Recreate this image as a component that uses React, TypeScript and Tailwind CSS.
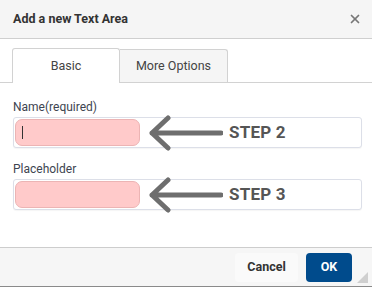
import { X } from 'lucide-react'

function Arrow() {
  return (
    <svg width="76" height="36" viewBox="0 0 76 36" className="shrink-0">
      <path d="M74 18H5M21 3L5 18l16 15" fill="none" stroke="#6e6e6e" strokeWidth="5" strokeLinecap="round" strokeLinejoin="round" />
    </svg>
  )
}

function AnnotatedField({ label, step, cursor = false }: { label: string, step: string, cursor?: boolean }) {
  return (
    <div className="flex flex-col">
      <label className="text-[12px] leading-[14px] text-[#3d4450]">{label}</label>
      <div className="mt-[3px] h-[31px] border border-[#dcdfe8] rounded-[3px] bg-white flex items-center shadow-[0_1px_1px_rgba(0,0,0,0.04)]">
        <div className="ml-px w-[125px] h-[27px] rounded-[7px] bg-[#ffcaca] border border-[#ecb4b4] flex items-center">
          {cursor && <div className="ml-[6px] w-px h-[13px] bg-[#333]" />}
        </div>
        <div className="ml-[7px]">
          <Arrow />
        </div>
        <span className="ml-[6px] text-[17px] font-bold text-[#555] leading-none tracking-[0.2px]">{step}</span>
      </div>
    </div>
  )
}

export default function App() {
  return (
    <div className="w-[372px] h-[287px] bg-white flex flex-col relative font-['Roboto','Liberation_Sans',sans-serif]">
      <div className="h-[39px] shrink-0 bg-[#f5f5f5] border-b border-[#cfcfcf] flex items-center justify-between pl-[13px] pr-[10px]">
        <h2 className="text-[12.5px] font-bold text-[#333] pt-px">Add a new Text Area</h2>
        <X size={14} strokeWidth={3} className="text-[#777]" />
      </div>

      <div className="h-[44px] shrink-0 flex items-end border-b border-[#d2d2d2] pl-[12px]">
        <div className="w-[108px] h-[35px] -mb-px bg-white border border-b-0 border-[#d2d2d2] rounded-t-[3px] flex items-center justify-center text-[12.5px] text-[#444]">
          Basic
        </div>
        <div className="w-[108px] h-[33px] bg-[#f5f5f5] border border-b-0 border-l-0 border-[#d2d2d2] rounded-tr-[3px] flex items-center justify-center text-[12.5px] text-[#444]">
          More Options
        </div>
      </div>

      <div className="flex-1 flex flex-col gap-[14px] pl-[13px] pr-[10px] pt-[17px]">
        <AnnotatedField label="Name(required)" step="STEP 2" cursor />
        <AnnotatedField label="Placeholder" step="STEP 3" />
      </div>

      <div className="h-[40px] shrink-0 bg-[#f6f6f6] border-t border-[#cdcdcd] border-b border-b-[#8a8a8a] flex items-center justify-end gap-[8px] pr-[20px]">
        <button className="w-[63px] h-[29px] bg-[#fafafa] rounded-[4px] text-[12.5px] font-bold text-[#333]">Cancel</button>
        <button className="w-[46px] h-[29px] bg-[#004b8c] rounded-[4px] text-[12.5px] font-bold text-white">OK</button>
      </div>
      <div className="absolute right-[4px] bottom-[4px] w-0 h-0 border-l-[11px] border-l-transparent border-b-[11px] border-b-[#cfcfcf]" />
    </div>
  )
}
